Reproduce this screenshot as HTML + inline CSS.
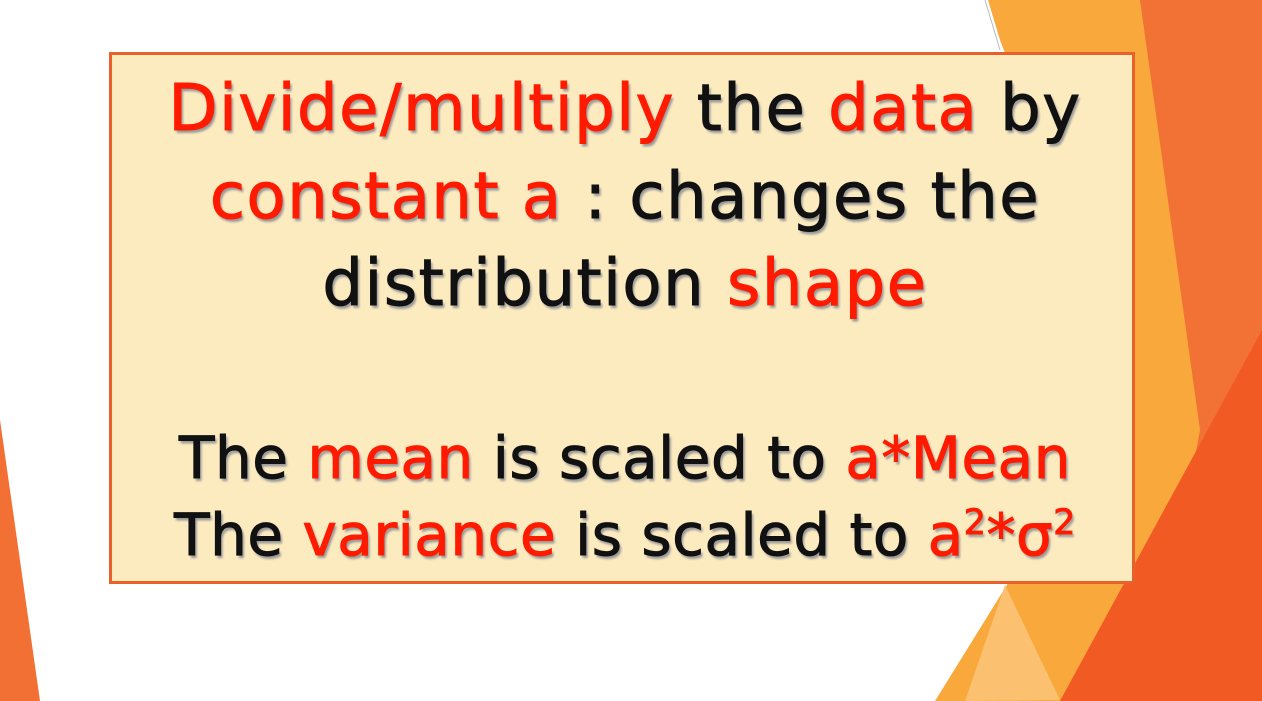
<!DOCTYPE html>
<html><head><meta charset="utf-8"><style>
html,body{margin:0;padding:0}
body{width:1262px;height:701px;position:relative;overflow:hidden;background:#fff;font-family:"DejaVu Sans","Liberation Sans",sans-serif}
svg.bg{position:absolute;left:0;top:0}
.box{position:absolute;left:109px;top:52px;width:1020px;height:526px;background:#fdebc0;border:3px solid #e8602a}
.l{position:absolute;left:0;width:1026px;text-align:center;font-size:64px;letter-spacing:1.5px;color:#111;white-space:nowrap;text-shadow:2px 3px 2px #999;line-height:1;-webkit-text-stroke:1px currentColor}
.r{color:#ff1a00}
sup{font-size:0.6em;vertical-align:0.6em;line-height:0}
</style></head><body>
<svg class="bg" width="1262" height="701">
<polygon points="0,420 40,701 0,701" fill="#f27033"/>
<polygon points="988,0 1262,0 1262,701 935,701 1010,580 1100,300 1000,40" fill="#f9a83c"/>
<polygon points="1140,0 1262,0 1262,701 1150,701 1200,430" fill="#f27236"/>
<polygon points="1262,330 1262,701 1060,701" fill="#f25a24"/>
<polygon points="1005,585 1060,700 965,701" fill="#fbc070"/>
<line x1="985" y1="0" x2="1000" y2="50" stroke="#bbb" stroke-width="1"/>
</svg>
<div class="box">
<div class="l" style="top:22px"><span class="r">Divide/multiply</span> the <span class="r">data</span> by</div>
<div class="l" style="top:110px"><span class="r">constant a</span> : changes the</div>
<div class="l" style="top:197px">distribution <span class="r">shape</span></div>
<div class="l" style="top:374px;font-size:58px;letter-spacing:0.5px">The <span class="r">mean</span> is scaled to <span class="r">a*Mean</span></div>
<div class="l" style="top:451px;font-size:58px;letter-spacing:0.5px">The <span class="r">variance</span> is scaled to <span class="r">a<sup>2</sup>*σ<sup>2</sup></span></div>
</div>
</body></html>
